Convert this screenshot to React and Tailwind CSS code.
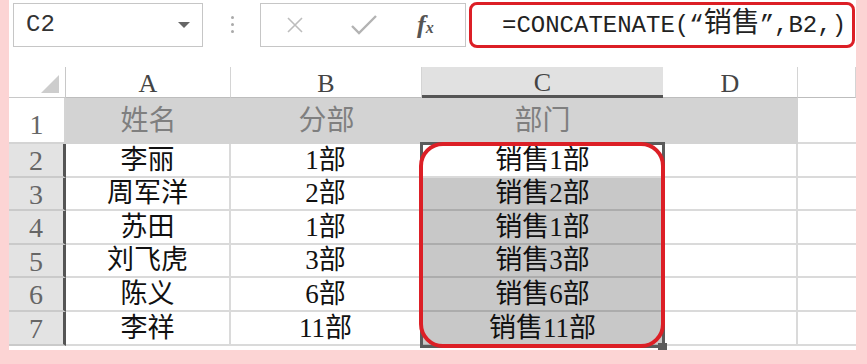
import React from 'react';

const W = [57, 165, 191, 241, 135, 58];
const rows = [
  ['2', '李丽', '1部', '销售1部', 34],
  ['3', '周军洋', '2部', '销售2部', 33],
  ['4', '苏田', '1部', '销售1部', 34],
  ['5', '刘飞虎', '3部', '销售3部', 33],
  ['6', '陈义', '6部', '销售6部', 34],
  ['7', '李祥', '11部', '销售11部', 34],
];

export default function App() {
  return (
    <div className="w-[867px] h-[364px] bg-[#fcd4d4] font-['Liberation_Mono','Noto_Sans_CJK_SC',monospace]">
      <div className="ml-[9px] w-[847px] h-[350px] bg-white overflow-hidden">
        {/* formula bar */}
        <div className="flex items-start h-[67px] pt-[2px]">
          <div className="mt-[1px] ml-[4px] w-[190px] h-[44px] border border-[#c6c6c6] flex items-center justify-between pl-[12px] pr-[12px]">
            <span className="text-[24px] text-[#333] leading-none">C2</span>
            <svg width="12" height="6" viewBox="0 0 12 6"><path d="M0 0h12L6 6z" fill="#666" /></svg>
          </div>
          <div className="ml-[28px] mt-[14px] flex flex-col gap-[4px]">
            <div className="w-[3px] h-[3px] bg-[#aaa] rounded-full" />
            <div className="w-[3px] h-[3px] bg-[#aaa] rounded-full" />
            <div className="w-[3px] h-[3px] bg-[#aaa] rounded-full" />
          </div>
          <div className="mt-[1px] ml-[26px] w-[206px] h-[44px] border border-[#c6c6c6] flex items-center">
            <svg className="ml-[26px]" width="16" height="16" viewBox="0 0 16 16">
              <path d="M1 1l14 14M15 1L1 15" stroke="#bdbdbd" strokeWidth="1.6" />
            </svg>
            <svg className="ml-[48px]" width="26" height="20" viewBox="0 0 26 20">
              <path d="M1 11l7 7L25 1" stroke="#b3b3b3" strokeWidth="2.4" fill="none" />
            </svg>
            <span className="ml-[40px] text-[#555] italic font-bold text-[26px] leading-none font-['Liberation_Serif',serif]">
              f<span className="text-[16px]">x</span>
            </span>
          </div>
          <div className="ml-[3px] w-[386px] h-[46px] border-[3px] border-[#dc1f26] rounded-[8px] flex items-center pl-[30px] overflow-hidden whitespace-nowrap">
            <span className="text-[24px] text-[#222] leading-none">
              =CONCATENATE(“<span className="text-[28px]">销售</span>”,B2,)
            </span>
          </div>
        </div>

        {/* grid */}
        <div className="relative font-['Liberation_Serif','Noto_Sans_CJK_SC',serif]">
          {/* column header */}
          <div className="flex h-[31px]">
            <div className="relative border-r border-b border-[#c8c8c8]" style={{ width: W[0] }}>
              <svg className="absolute left-[32px] top-[8px]" width="18" height="18" viewBox="0 0 18 18">
                <path d="M18 0v18H0z" fill="#cdcdcd" />
              </svg>
            </div>
            {['A', 'B', 'C', 'D', ''].map((l, i) => (
              <div
                key={i}
                className={`flex items-center justify-center text-[26px] leading-none pt-[4px] ${
                  l === 'C'
                    ? 'bg-[#e1e1e1] border-b-[3px] border-[#555] text-[#444]'
                    : 'border-r border-b border-r-[#d4d4d4] border-b-[#bdbdbd] text-[#444]'
                }`}
                style={{ width: W[i + 1] }}
              >
                {l}
              </div>
            ))}
          </div>

          {/* row 1 */}
          <div className="flex h-[46px]">
            <div className="flex items-end justify-center pb-[3px] border-r-2 border-b-2 border-[#d4d4d4] text-[28px] text-[#666] leading-none" style={{ width: W[0] }}>
              1
            </div>
            {['姓名', '分部', '部门', ''].map((t, i) => (
              <div
                key={i}
                className="flex items-end justify-center pb-[3px] bg-[#d3d3d3] border-b-2 border-[#d3d3d3] text-[28px] text-[#7f7f7f] leading-[36px]"
                style={{ width: W[i + 1] }}
              >
                {t}
              </div>
            ))}
            <div className="border-b-2 border-[#dadada]" style={{ width: W[5] }} />
          </div>

          {/* data rows */}
          {rows.map(([n, a, b, c, h], r) => (
            <div key={n} className="flex" style={{ height: h }}>
              <div className="flex items-center justify-center pt-[2px] bg-[#e3e3e3] border-r-[3px] border-r-[#555] border-b-2 border-b-[#cacaca] text-[28px] text-[#666] leading-none" style={{ width: W[0] }}>
                {n}
              </div>
              <div className="flex items-center justify-center border-r-2 border-b-2 border-[#dadada] text-[27px] text-[#111] leading-none" style={{ width: W[1] }}>
                {a}
              </div>
              <div className="flex items-center justify-center border-r-2 border-b-2 border-[#dadada] text-[27px] text-[#111] leading-none" style={{ width: W[2] }}>
                {b}
              </div>
              <div
                className={`flex items-center justify-center border-b-2 text-[27px] text-[#111] leading-none ${
                  r === 0 ? 'bg-white border-[#dadada]' : 'bg-[#c8c8c8] border-[#acacac]'
                }`}
                style={{ width: W[3] }}
              >
                {c}
              </div>
              <div className="border-r-2 border-b-2 border-[#dadada]" style={{ width: W[4] }} />
              <div className="border-b-2 border-[#dadada]" style={{ width: W[5] }} />
            </div>
          ))}

          {/* selection outline */}
          <div className="absolute left-[411px] top-[75px] w-[245px] h-[206px] border-[3px] border-[#5b5b5b]" />
          {/* fill handle */}
          <div className="absolute left-[649px] top-[276px] w-[9px] h-[8px] bg-[#5b5b5b]" />
          {/* red highlight */}
          <div className="absolute left-[410px] top-[75px] w-[246px] h-[206px] border-[4px] border-[#dc1f26] rounded-[24px]" />
        </div>
      </div>
    </div>
  );
}
